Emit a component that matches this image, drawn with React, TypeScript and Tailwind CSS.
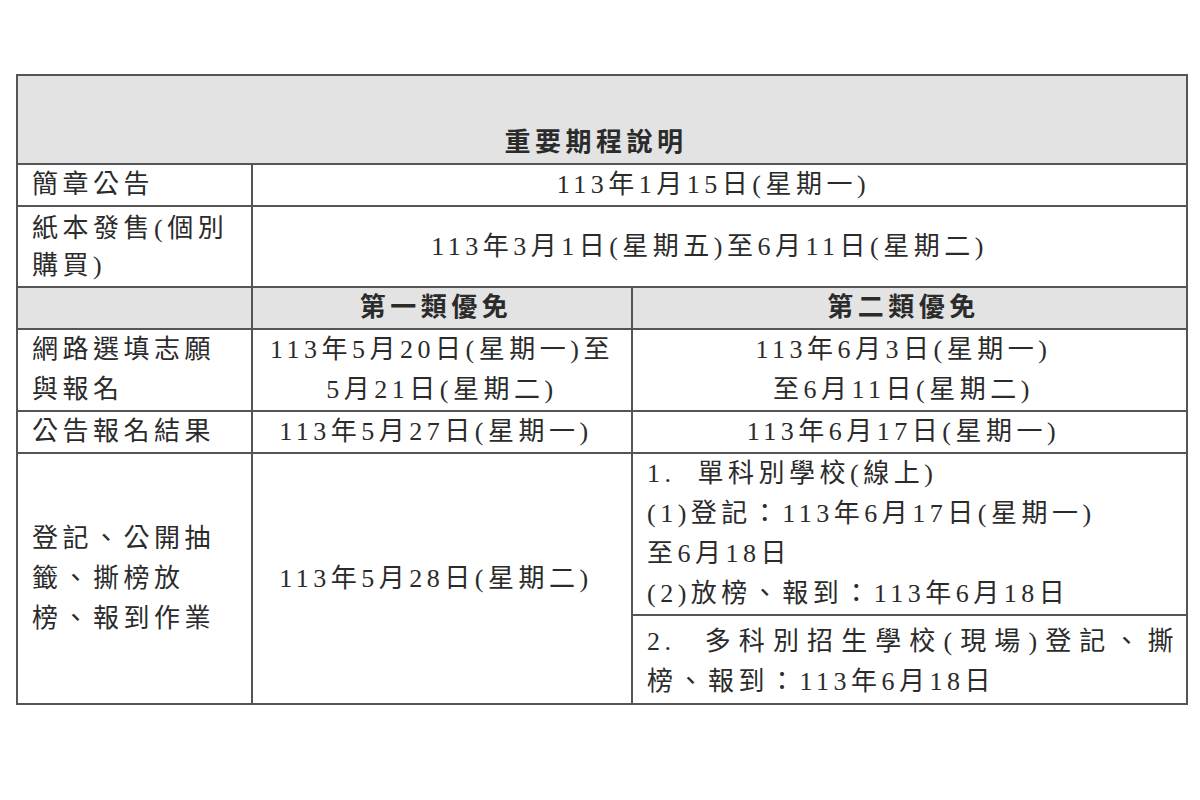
export default function App() {
  const cell = "border-2 border-[#555555] px-[14px]";
  const mid = "border-2 border-[#555555] pl-[8px] pr-[20px] text-center";

  return (
    <div className="min-h-screen bg-white pt-[74px] pl-4 font-[family-name:'Liberation_Serif','Noto_Sans_CJK_TC',serif] text-[26px] tracking-[4.5px] text-[#2b2b2b]">
      <table className="w-[1170px] table-fixed border-collapse border-2 border-[#555555] leading-[40px]">
        <colgroup>
          <col className="w-[235px]" />
          <col className="w-[380px]" />
          <col className="w-[555px]" />
        </colgroup>
        <tbody>
          <tr className="h-[89px] bg-[#e3e3e3]">
            <th colSpan={3} className={`${mid} align-bottom font-bold`}>
              重要期程說明
            </th>
          </tr>

          <tr className="h-[38px]">
            <td className={`${cell} whitespace-nowrap`}>簡章公告</td>
            <td colSpan={2} className={mid}>113年1月15日(星期一)</td>
          </tr>

          <tr className="h-[81px]">
            <td className={`${cell} whitespace-nowrap leading-[37px]`}>
              紙本發售(個別
              <br />
              購買)
            </td>
            <td colSpan={2} className={`${cell} pl-[4px] pr-[24px] text-center`}>
              113年3月1日(星期五)至6月11日(星期二)
            </td>
          </tr>

          <tr className="h-[38px] bg-[#e3e3e3]">
            <td className={cell}></td>
            <td className={`${mid} font-bold`}>第一類優免</td>
            <td className={`${mid} font-bold`}>第二類優免</td>
          </tr>

          <tr className="h-[81px]">
            <td className={`${cell} whitespace-nowrap`}>
              網路選填志願
              <br />
              與報名
            </td>
            <td className={`${cell} whitespace-nowrap text-center`}>
              113年5月20日(星期一)至
              <br />
              5月21日(星期二)
            </td>
            <td className={`${mid} whitespace-nowrap`}>
              113年6月3日(星期一)
              <br />
              至6月11日(星期二)
            </td>
          </tr>

          <tr className="h-[39px]">
            <td className={`${cell} whitespace-nowrap`}>公告報名結果</td>
            <td className={mid}>113年5月27日(星期一)</td>
            <td className={mid}>113年6月17日(星期一)</td>
          </tr>

          <tr className="h-[161px]">
            <td rowSpan={2} className={`${cell} whitespace-nowrap`}>
              登記、公開抽
              <br />
              籤、撕榜放
              <br />
              榜、報到作業
            </td>
            <td rowSpan={2} className={mid}>113年5月28日(星期二)</td>
            <td className={`${cell} whitespace-nowrap pt-0 align-top`}>
              <div>1.&nbsp;&nbsp;單科別學校(線上)</div>
              <div>(1)登記：113年6月17日(星期一)</div>
              <div>至6月18日</div>
              <div>(2)放榜、報到：113年6月18日</div>
            </td>
          </tr>

          <tr className="h-[89px]">
            <td className={`${cell} pt-[6px] pr-[8px] align-top`}>
              <div className="text-justify [text-align-last:justify]">2.&nbsp;&nbsp;多科別招生學校(現場)登記、撕</div>
              <div className="whitespace-nowrap">榜、報到：113年6月18日</div>
            </td>
          </tr>
        </tbody>
      </table>
    </div>
  );
}
